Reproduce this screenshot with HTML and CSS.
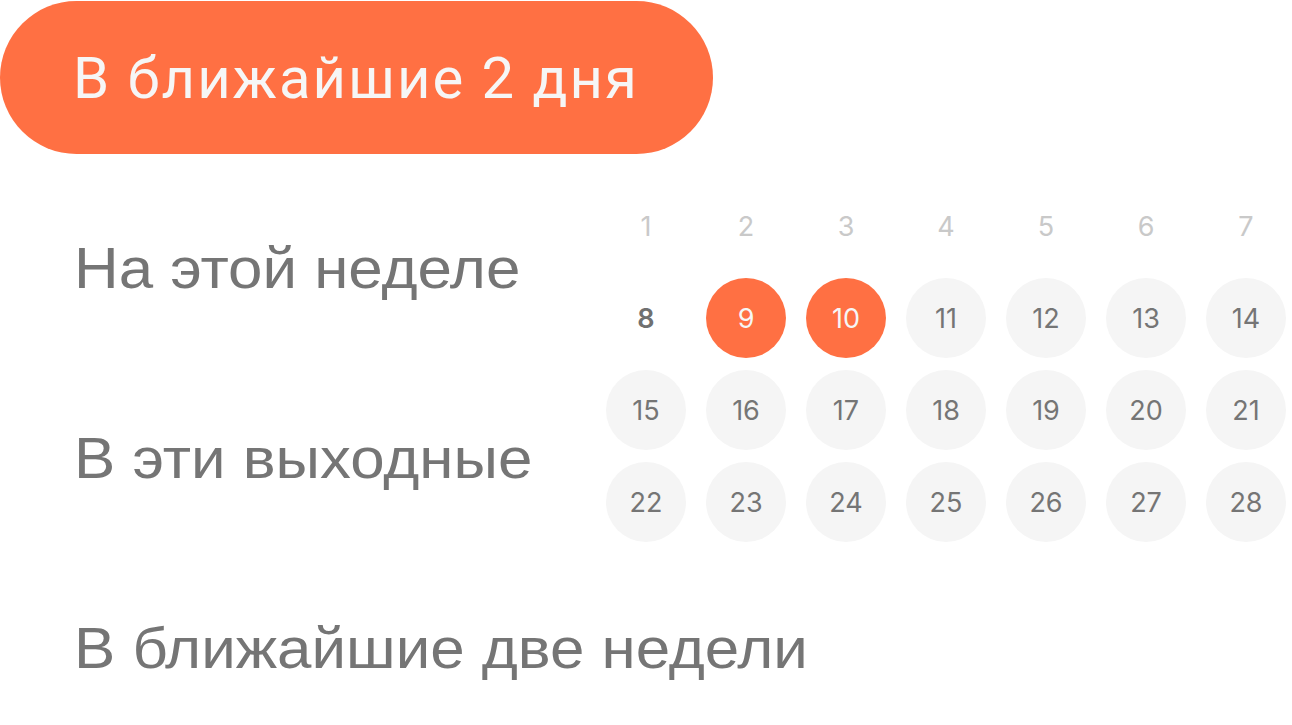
FILE: index.html
```html
<!DOCTYPE html>
<html lang="ru">
<head>
<meta charset="utf-8">
<title>Период</title>
<link rel="stylesheet" href="styles.css">
</head>
<body>
<main class="picker">
  <div class="option option--active option--wide">В ближайшие 2 дня</div>
  <div class="option option--r2"><span class="option__label">На этой неделе</span></div>
  <div class="option option--r3"><span class="option__label">В эти выходные</span></div>
  <div class="option option--r4 option--wide"><span class="option__label">В ближайшие две недели</span></div>

  <section class="calendar">
    <span class="day day--head">1</span>
    <span class="day day--head">2</span>
    <span class="day day--head">3</span>
    <span class="day day--head">4</span>
    <span class="day day--head">5</span>
    <span class="day day--head">6</span>
    <span class="day day--head">7</span>

    <span class="day day--today">8</span>
    <span class="day day--selected">9</span>
    <span class="day day--selected">10</span>
    <span class="day">11</span>
    <span class="day">12</span>
    <span class="day">13</span>
    <span class="day">14</span>

    <span class="day">15</span>
    <span class="day">16</span>
    <span class="day">17</span>
    <span class="day">18</span>
    <span class="day">19</span>
    <span class="day">20</span>
    <span class="day">21</span>

    <span class="day">22</span>
    <span class="day">23</span>
    <span class="day">24</span>
    <span class="day">25</span>
    <span class="day">26</span>
    <span class="day">27</span>
    <span class="day">28</span>
  </section>
</main>
</body>
</html>
```

FILE: styles.css
```css
html, body {
  margin: 0;
  padding: 0;
  background: #ffffff;
}

body {
  font-family: Roboto, "Liberation Sans", sans-serif;
  overflow: hidden;
}

.picker {
  display: grid;
  grid-template-columns: 606px 686px;
  grid-template-rows: 153px 153px 153px 153px;
  row-gap: 37px;
  padding-top: 1px;
}

.option {
  grid-column: 1;
  display: flex;
  align-items: center;
  height: 153px;
  padding: 0 74px 0 74px;
  font-family: "Liberation Sans", Arial, sans-serif;
  font-size: 57px;
  font-weight: 400;
  color: #757575;
  white-space: nowrap;
  box-sizing: border-box;
  justify-self: start;
}

.option__label {
  display: inline-block;
  transform: scaleX(1.085);
  transform-origin: left center;
}

.option--wide {
  grid-column: 1 / -1;
}

.option--active {
  grid-row: 1;
  padding: 0 74px 0 73px;
  font-family: Roboto, "Liberation Sans", sans-serif;
  font-size: 58px;
  letter-spacing: 2px;
  background: #ff7043;
  color: #f6f6f6;
  border-radius: 77px;
}

.option--r2 { grid-row: 2; }
.option--r3 { grid-row: 3; }
.option--r4 { grid-row: 4; }

.calendar {
  grid-column: 2;
  grid-row: 2 / 5;
  align-self: start;
  margin-top: -5px;
  display: grid;
  grid-template-columns: repeat(7, 80px);
  grid-auto-rows: 80px;
  column-gap: 20px;
  row-gap: 12px;
  font-family: Inter, Roboto, sans-serif;
}

.day {
  display: flex;
  align-items: center;
  justify-content: center;
  width: 80px;
  height: 80px;
  border-radius: 50%;
  background: #f5f5f5;
  color: #757575;
  font-size: 27px;
  font-weight: 400;
}

.day--head {
  background: transparent;
  color: #c9c9c9;
}

.day--today {
  background: transparent;
  color: #707070;
  font-weight: 600;
}

.day--selected {
  background: #ff7043;
  color: #f6f6f6;
}
```
